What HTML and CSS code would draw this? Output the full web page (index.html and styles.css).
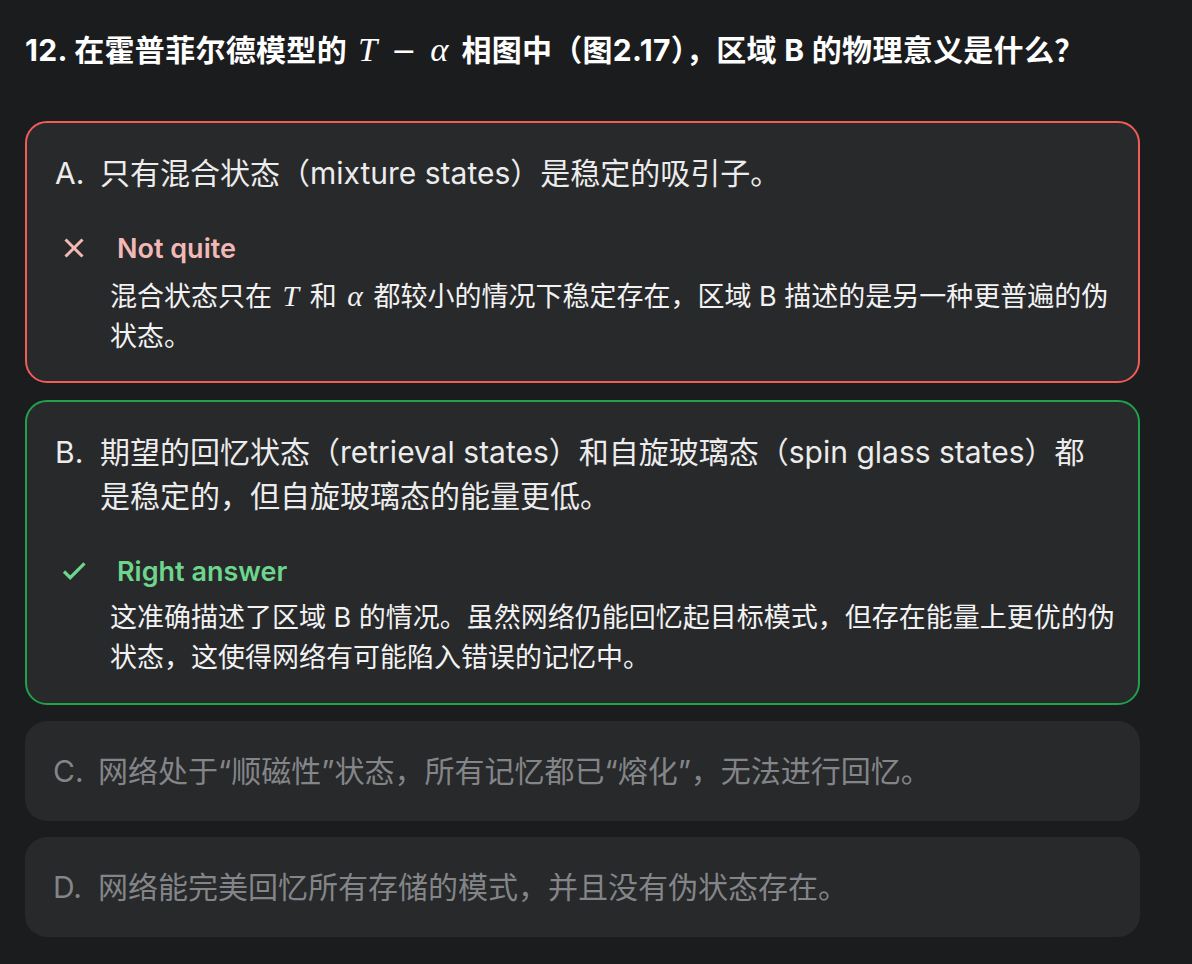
FILE: index.html
```html
<!DOCTYPE html>
<html lang="zh-CN">
<head>
<meta charset="utf-8">
<title>Quiz</title>
<link rel="stylesheet" href="styles.css">
</head>
<body>
<main class="quiz">
  <h1 class="question">12. 在霍普菲尔德模型的<span class="math"><i class="mi">T</i><span class="mo">−</span><i class="mi">α</i></span>相图中（图2.17），区域 B 的物理意义是什么？</h1>

  <div class="options">
    <div class="option option--wrong">
      <div class="option-main"><span class="label">A.</span><span class="text">只有混合状态（mixture states）是稳定的吸引子。</span></div>
      <div class="feedback feedback--wrong">
        <div class="feedback-head">
          <svg class="fb-icon" viewBox="0 0 30 30" aria-hidden="true"><path d="M6.5 6.5 23.5 23.5M23.5 6.5 6.5 23.5"/></svg>
          <span class="fb-title">Not quite</span>
        </div>
        <p class="feedback-body">混合状态只在 <i class="mi">T</i> 和 <i class="mi">α</i> 都较小的情况下稳定存在，区域 B 描述的是另一种更普遍的伪状态。</p>
      </div>
    </div>

    <div class="option option--right">
      <div class="option-main"><span class="label">B.</span><span class="text">期望的回忆状态（retrieval states）和自旋玻璃态（spin glass states）都是稳定的，但自旋玻璃态的能量更低。</span></div>
      <div class="feedback feedback--right">
        <div class="feedback-head">
          <svg class="fb-icon" viewBox="0 0 30 30" aria-hidden="true"><path d="M5 15.5 11.2 21.7 25.5 7.4"/></svg>
          <span class="fb-title">Right answer</span>
        </div>
        <p class="feedback-body">这准确描述了区域 B 的情况。虽然网络仍能回忆起目标模式，但存在能量上更优的伪状态，这使得网络有可能陷入错误的记忆中。</p>
      </div>
    </div>

    <div class="option option--muted">
      <div class="option-main"><span class="label">C.</span><span class="text">网络处于“顺磁性”状态，所有记忆都已“熔化”，无法进行回忆。</span></div>
    </div>

    <div class="option option--muted">
      <div class="option-main"><span class="label">D.</span><span class="text">网络能完美回忆所有存储的模式，并且没有伪状态存在。</span></div>
    </div>
  </div>
</main>
</body>
</html>
```

FILE: styles.css
```css
html, body {
  margin: 0;
  padding: 0;
  background: #1b1c1e;
}

body {
  font-family: "Inter", "Noto Sans CJK SC", sans-serif;
  color: #ececec;
}

.quiz {
  padding: 30px 52px 40px 25px;
}

.question {
  margin: 0 0 51px 0;
  font-size: 30px;
  line-height: 40px;
  font-weight: 700;
  letter-spacing: 0.3px;
  color: #ffffff;
}

.math {
  font-weight: 400;
  margin: 0 13px 0 11px;
  line-height: 1;
  letter-spacing: 0;
}

.mi {
  font-family: "Liberation Serif", "DejaVu Serif", serif;
  font-style: italic;
  font-size: 1.1em;
  font-weight: 400;
  line-height: 1;
}

.question .mi {
  font-size: 1.15em;
}

.mo {
  font-family: "DejaVu Serif", "Liberation Serif", serif;
  font-weight: 400;
  font-size: 1em;
  line-height: 1;
  margin: 0 14px;
}

.options {
  display: flex;
  flex-direction: column;
  gap: 16px;
}

.option {
  background: #28292b;
  border-radius: 22px;
  padding: 28px 22px 28px 28px;
}

.option--wrong {
  border: 2px solid #f05d57;
  padding-bottom: 24px;
  margin-bottom: 1px;
}

.option--right {
  border: 2px solid #1fa24a;
  padding-bottom: 25px;
}

.option-main {
  display: flex;
  font-size: 30px;
  line-height: 44px;
  margin-right: 6px;
}

.label {
  flex: 0 0 45px;
}

.text {
  flex: 1 1 auto;
}

.option--muted .option-main {
  color: #838588;
}

.feedback {
  margin-top: 33px;
  padding-left: 4px;
}

.feedback-head {
  display: flex;
  align-items: center;
  gap: 28px;
  height: 40px;
}

.fb-icon {
  width: 30px;
  height: 30px;
  flex: 0 0 30px;
  fill: none;
  stroke-width: 3px;
}

.fb-title {
  font-size: 27px;
  font-weight: 600;
}

.feedback--wrong .fb-icon { stroke: #f2b8b5; }
.feedback--wrong .fb-title { color: #f2b8b5; }
.feedback--right .fb-icon { stroke: #6dd58c; stroke-width: 3.2px; }
.feedback--right .fb-title { color: #6dd58c; }

.feedback-body {
  margin: 9px 0 0 51px;
  font-size: 27px;
  line-height: 40px;
  color: #f2f2f2;
}

.feedback-body .mi {
  margin: 0 3px;
}

.feedback--right .feedback-body {
  margin-top: 7px;
}
```
